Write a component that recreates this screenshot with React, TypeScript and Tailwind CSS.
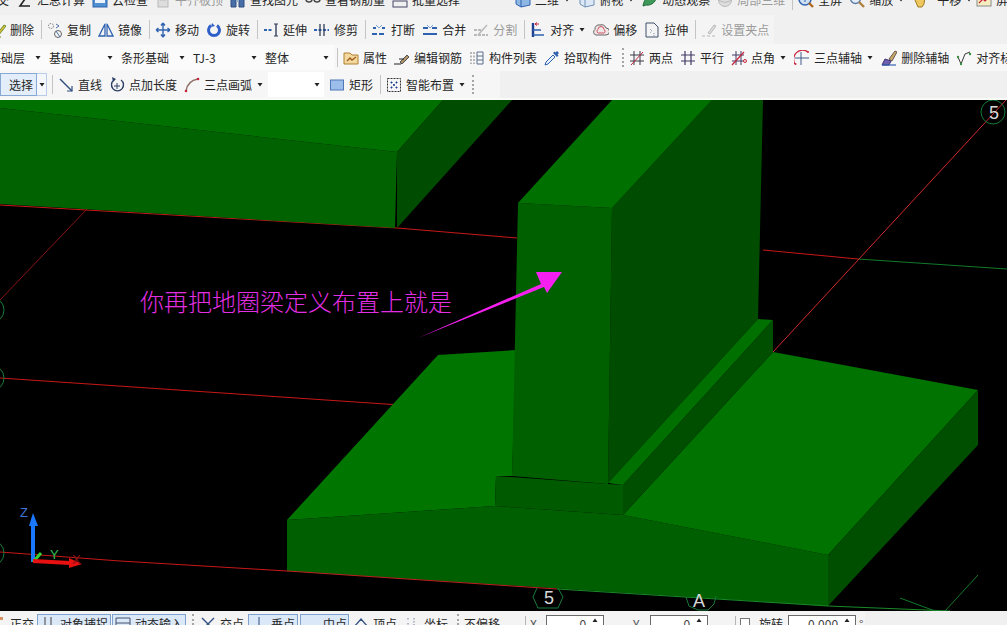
import React from "react";

const Ic = ({ children }: { children?: React.ReactNode }) => (
  <svg viewBox="0 0 16 16" className="w-4 h-4 shrink-0" fill="none" strokeWidth="1">
    {children}
  </svg>
);

const B = "#2f62b0";
const D = "#33405a";
const G = "#b9b9b9";
const R = "#c8243c";

const icons: Record<string, React.ReactNode> = {
  pen: (<><path d="M6 13l8-10 2 1-8 10z" fill="#d8c23c" stroke="#6f8f2c" /><path d="M3 15h9" stroke="#6f8f2c" strokeDasharray="2 1" /></>),
  copy: (<><circle cx="4" cy="4" r="2.5" stroke="#777" strokeDasharray="1.5 1" /><circle cx="11" cy="12" r="3.5" stroke="#666" /><path d="M9 2l3 2-3 2M9 9l4 6" stroke="#4d6fa8" /></>),
  mirror: (<><path d="M7 2v12H1zM9 2v12h6z" stroke={B} strokeWidth="1.3" /><path d="M8 1v14" stroke="#8aa5d0" /></>),
  move: (<path d="M8 1v14M1 8h14M8 1L6 3.5M8 1l2 2.5M8 15l-2-2.5M8 15l2-2.5M1 8l2.5-2M1 8l2.5 2M15 8l-2.5-2M15 8l-2.5 2" stroke={B} strokeWidth="1.4" />),
  rotate: (<><path d="M5 3.5A5.5 5.5 0 1 0 11 3.5" stroke="#2f5fc8" strokeWidth="3" /><path d="M6 1l3 3-4 1z" fill="#2f5fc8" /></>),
  extend: (<><path d="M1 8h9" stroke={B} strokeWidth="2" strokeDasharray="3 1.5" /><path d="M13 2v12" stroke={D} strokeWidth="1.4" /><path d="M11 2h4M11 14h4" stroke={D} /></>),
  trim: (<><path d="M0 8h15" stroke={B} strokeWidth="2" strokeDasharray="3 1.5" /><path d="M6 2v12M10 2v12" stroke={D} strokeWidth="1.3" /></>),
  brk: (<><path d="M1 12h14" stroke={B} strokeWidth="2" strokeDasharray="5 2" /><path d="M2 6h3M11 6h3" stroke={B} strokeWidth="2" /><path d="M5 3l3 3M11 3L8 6" stroke="#7da2ce" /></>),
  merge: (<><path d="M1 12h14" stroke={B} strokeWidth="2" /><path d="M1 6h5M10 6h5" stroke={B} strokeWidth="2" /><path d="M5 3l3 3M11 3L8 6" stroke="#7da2ce" /></>),
  split: (<><path d="M1 13h14M1 8h9" stroke={G} strokeWidth="2" strokeDasharray="3 1" /><path d="M5 13L14 3" stroke={G} strokeWidth="1.5" /></>),
  align: (<><path d="M3 1v14" stroke="#1f3f8f" strokeWidth="2.4" /><path d="M3 13h11M3 8h8" stroke="#2f62b0" strokeWidth="1.5" /><path d="M9 2H5l2-1.5M5 2l2 1.5" stroke={R} /></>),
  offset: (<><path d="M3 13a3 3 0 0 1-1-5.5A4 4 0 0 1 7 3a5 5 0 0 1 6 3 3.5 3.5 0 0 1 0 7z" stroke="#666" fill="#efe7e7" /><path d="M5 11a2 2 0 0 1 0-3.5 3 3 0 0 1 6 0 2 2 0 0 1 0 3.5z" stroke="#d05060" /></>),
  stretch: (<><path d="M2 1h8l4 4v10H2z" stroke="#40506a" /><path d="M6 7l2 2-2 2M10 14V10" stroke="#7a8cab" strokeDasharray="1 1" /></>),
  grip: (<><path d="M7 11l6-8 2 1-6 8z" fill="#ddd" stroke={G} /><path d="M1 14h13" stroke={G} strokeDasharray="3 2" /></>),
  attr: (<><path d="M1 3h6l2 2h6v9H1z" fill="#f3d9a0" stroke="#b08030" /><path d="M4 11l3-3 2 2 4-3" stroke="#a06020" strokeWidth="1.4" /></>),
  rebar: (<><path d="M0 14h7" stroke="#222" /><path d="M6 12l7-7 2 2-7 7z" fill="#b09468" stroke="#555" /><path d="M5 9h5" stroke="#222" /></>),
  list: (<><path d="M2 2v12M5 2v12" stroke="#777" strokeDasharray="2 1.5" /><path d="M8 2h6v12H8zM8 6h6M8 10h6" stroke="#5a6f90" /></>),
  pick: (<><path d="M1 15l1-3 7-7 2 2-7 7z" fill="#e8f0fa" stroke={B} /><path d="M9 3l4 4 1.5-1.5-1-1L15 3l-2-2-1.5 1.5-1-1z" fill={B} /></>),
  twop: (<><path d="M5 1v14M11 1v14M1 5h14M1 11h14" stroke="#3a3a4a" /><path d="M2 15L14 2" stroke={R} /></>),
  par: (<path d="M5 1v14M11 1v14M1 5h14M1 11h14" stroke="#433a66" strokeWidth="1.2" />),
  angle: (<><path d="M5 1v14M10 1v14M1 5h12M1 11h12" stroke="#433a66" /><path d="M1 15L13 2" stroke={R} strokeWidth="1.2" /><circle cx="14" cy="11" r="1.5" stroke={R} /></>),
  taxis: (<><path d="M1 14A9 9 0 0 1 14 2" stroke={R} strokeWidth="1.2" /><path d="M7 2v13M1 8h14" stroke="#3f5a8a" /><circle cx="1.5" cy="14" r="1" fill={R} /><circle cx="14" cy="2" r="1" fill={R} /></>),
  del: (<><path d="M8 9l6-8 2 1-5 9z" fill="#c8a868" stroke="#6a5a50" /><path d="M1 15l3-6 6 2-2 4z" fill="#7060b0" stroke="#403070" /><path d="M1 15h14" stroke="#3060b0" strokeWidth="1.2" /></>),
  mark: (<><path d="M2 7l3 7 4-10 5-2" stroke="#3a3a3a" /><circle cx="2" cy="7" r="1.2" fill="#3a9040" /><circle cx="5" cy="14" r="1.2" fill="#3a9040" /><circle cx="14" cy="4" r="1.2" fill="#3a9040" /></>),
  line: (<><path d="M2 2l12 12" stroke="#2f4f80" strokeWidth="1.4" /><path d="M14 9v5H9" stroke="#2f4f80" strokeWidth="1.2" /></>),
  plen: (<><path d="M5 3A6 6 0 1 0 12 3" stroke="#2d3f66" strokeWidth="1.4" /><path d="M3 0l4 2-3 3z" fill="#2d3f66" /><path d="M8 6v6M5 9h6" stroke="#2d3f66" /></>),
  arc: (<><path d="M2 14C3 7 8 3 14 2" stroke="#907068" strokeWidth="1.5" /><circle cx="2" cy="14" r="1.3" fill={R} /><circle cx="14" cy="2" r="1.3" fill={R} /></>),
  rect: (<rect x="1.5" y="3" width="13" height="10" fill="#9dbdea" stroke="#4f78b8" />),
  smart: (<><rect x="1.5" y="1.5" width="13" height="13" stroke="#333" strokeDasharray="2 1" /><path d="M5 5h1v1H5zM10 5h1v1h-1zM5 10h1v1H5zM10 10h1v1h-1zM7.5 7.5h1v1h-1z" fill="#1f3f8f" stroke="#1f3f8f" /></>),
  sigma: (<path d="M13 14H3l5-7-5-6h10" stroke="#222" strokeWidth="1.6" />),
  cloud: (<><rect x="1" y="1" width="14" height="14" fill="#4f8fd0" stroke="#2f62b0" /><rect x="3" y="3" width="10" height="8" fill="#eaf3fb" /></>),
  sheet: (<><rect x="3" y="1" width="10" height="14" fill="#ddd" stroke={G} /><path d="M5 5h6M5 8h6" stroke={G} /></>),
  find: (<><path d="M1 2h5v13H1zM9 2h5v13H9z" fill="#486ea8" stroke="#2f4f80" /><rect x="6" y="5" width="3" height="5" fill="#98b0d0" /></>),
  view: (<><circle cx="4" cy="7" r="3" stroke="#444" strokeWidth="1.5" /><circle cx="12" cy="7" r="3" stroke="#444" strokeWidth="1.5" /><path d="M7 7h2" stroke="#444" /></>),
  batch: (<><rect x="1" y="1" width="6" height="6" stroke="#446" /><rect x="9" y="1" width="6" height="6" fill="#8aa8d8" stroke="#446" /><rect x="1" y="9" width="14" height="6" stroke="#446" /></>),
  cube: (<><path d="M1 3l9-2 5 3v9l-9 2-5-3z" fill="#8fb7e4" stroke="#2f62b0" /><path d="M6 5v10M1 3l5 2 9-1" stroke="#2f62b0" /></>),
  cube2: (<><path d="M1 3l9-2 5 3v9l-9 2-5-3z" fill="#dce8f5" stroke="#7090b8" /><path d="M6 5v10M1 3l5 2 9-1" stroke="#7090b8" /></>),
  leaf: (<path d="M1 14C2 6 8 2 15 2c0 7-5 12-11 11z" fill="#3f9a5a" stroke="#226a3a" />),
  orb: (<><circle cx="8" cy="8" r="6.5" fill="#ddd" stroke={G} /><path d="M2 8c4 3 8 3 12 0" stroke={G} /></>),
  full: (<><circle cx="7" cy="7" r="6" fill="#cfe0f5" stroke="#2f62b0" strokeWidth="1.5" /><path d="M11 11l4 4" stroke="#b06a20" strokeWidth="2.4" /><path d="M7 4v6M4 7h6" stroke="#2f62b0" /></>),
  zoom: (<><circle cx="6.5" cy="6.5" r="5" fill="#e5eef8" stroke="#5a7aa8" strokeWidth="1.4" /><path d="M10 10l5 5" stroke="#b08040" strokeWidth="2.4" /></>),
  hand: (<path d="M3 8l1-4 2 2 1-5 2 0 1 4 2-2 1 2-1 7-2 3H6z" fill="#f0c860" stroke="#a07a20" />),
  screen: (<><rect x="1" y="2" width="14" height="12" fill="#f6edc0" stroke="#888" /><path d="M3 11l4-4 2 2 4-4" stroke={R} strokeWidth="1.2" /></>),
  snap: (<><path d="M5 1v11M11 1v11M1 12h14" stroke="#444" /><path d="M4 11h8v4H4z" fill="#d08050" /></>),
  dyn: (<><path d="M1 2h14v11H1zM1 7h14" stroke="#405070" /></>),
  cross: (<path d="M2 2l12 12M14 2L2 14" stroke="#2f4f80" strokeWidth="1.4" />),
  mid: (<><path d="M8 1v14" stroke="#2f4f80" /><path d="M2 15h12" stroke="#2f4f80" /></>),
  cen: (<rect x="6" y="9" width="5" height="5" fill="#1f3f8f" />),
  top: (<path d="M1 11l7-8 7 8v4H1z" stroke="#2f4f80" strokeWidth="1.3" />),
  coord: (<path d="M4 2v2M4 7v2M4 12v2M10 2v12" stroke="#6f7f9a" strokeDasharray="1.5 1.5" />),
};

const Caret = ({ c = "ml-[4px]" }: { c?: string }) => (
  <svg viewBox="0 0 8 4" className={`w-2 h-1 shrink-0 ${c}`}>
    <path d="M1.5 0h5L4 3.5z" fill="#222" />
  </svg>
);

function T({
  i,
  t,
  c = "ml-[7px]",
  gray,
  arrow,
  gap = "gap-[4px]",
}: {
  i: string;
  t: string;
  c?: string;
  gray?: boolean;
  arrow?: boolean;
  gap?: string;
}) {
  return (
    <div className={`flex items-center shrink-0 ${c}`}>
      <div className={`flex items-center ${gap}`}>
        <Ic>{icons[i]}</Ic>
        <span className={`whitespace-nowrap ${gray ? "text-[#9b9b9b]" : "text-[#262626]"}`}>{t}</span>
      </div>
      {arrow && <Caret />}
    </div>
  );
}

const Sep = () => <div className="w-px h-[19px] bg-[#c4c4c4] ml-[7px] -mr-[2px] shrink-0" />;
const Handle = ({ c = "ml-[10px] -mr-[2px]" }: { c?: string }) => (
  <div className={`w-[2px] h-[19px] shrink-0 border-l-2 border-dotted border-[#a5a5a5] ${c}`} />
);

function Combo({ t, c = "w-[72px] pl-[3px]" }: { t: string; c?: string }) {
  return (
    <div className={`flex items-center justify-between h-[25px] bg-[#fbfbfb] pr-[4px] shrink-0 ${c}`}>
      <span className="text-[#262626] whitespace-nowrap">{t}</span>
      <Caret c="" />
    </div>
  );
}

function Spin({ v, c }: { v: string; c: string }) {
  return (
    <div className={`flex items-start justify-end gap-[5px] h-[20px] bg-white border border-[#6a6a6a] pr-[4px] shrink-0 ${c}`}>
      <span className="text-[#444]">{v}</span>
      <svg viewBox="0 0 8 4" className="w-2 h-1 mt-[2px]">
        <path d="M1.5 4h5L4 .5z" fill="#222" />
      </svg>
    </div>
  );
}

function SnapBtn({ i, t, c }: { i: string; t: string; c: string }) {
  return (
    <div className={`flex items-start gap-[4px] h-[22px] -mt-[2px] pt-px pl-[2px] bg-[#dbe8f7] border border-[#7da2ce] shrink-0 ${c}`}>
      <Ic>{icons[i]}</Ic>
      <span className="text-[#262626] whitespace-nowrap">{t}</span>
    </div>
  );
}

function Scene() {
  return (
    <svg viewBox="0 100 1007 511" className="block w-[1007px] h-[511px]">
      {/* ground lines */}
      <g fill="none" strokeWidth="1">
        <path d="M0 205L397 228L517 238M763 250L858 259" stroke="#c81818" />
        <path d="M858 259L1007 269" stroke="#127a2a" />
        <path d="M1006 100L773 352" stroke="#d02a2a" />
        <path d="M0 300L88 208" stroke="#8a1414" />
        <path d="M0 378L400 405" stroke="#c81818" />
        <path d="M0 552L120 561L287 571" stroke="#c81818" />
        <path d="M900 598L935 611M978 575L945 611" stroke="#127a2a" />
      </g>

      {/* left block */}
      <polygon points="0,108 397,152 395,228 0,204" fill="#006200" />
      <polygon points="0,100 443,100 397,152 0,108" fill="#007000" />
      <polygon points="443,100 512,100 397,228 397,152" fill="#004c00" />

      {/* footing */}
      <polygon points="438,355 516,350 512,476 496,476 495,506 287,520" fill="#007600" />
      <polygon points="287,520 495,506 623,515 828,555 828,606 287,571" fill="#005f00" />
      <polygon points="623,515 773,352 978,390 828,555" fill="#007300" />
      <polygon points="828,555 978,390 978,445 828,606" fill="#004f00" />

      {/* stem */}
      <polygon points="612,208 712,100 763,100 758,319 608,483" fill="#004c00" />
      <polygon points="518,203 612,208 608,484 512,476" fill="#006000" />
      <polygon points="518,203 612,100 712,100 612,208" fill="#007000" />
      <polygon points="496,476 608,484 623,485 623,515 495,506" fill="#005a00" />
      <polygon points="758,319 773,320 623,485 608,483" fill="#007000" />
      <polygon points="773,320 773,352 623,515 623,485" fill="#004f00" />

      {/* slab edge lines */}
      <path d="M287 571L557 589" stroke="#c02020" fill="none" />
      <path d="M557 589L828 606L950 611" stroke="#1a8a2a" fill="none" />

      {/* axis markers */}
      <g fill="none" stroke="#177a3a">
        <circle cx="993" cy="112" r="12" />
        <path d="M537 588l-4 9 5 11h20l5-11-5-9" />
        <path d="M686 597l3 9 9 4h10l6-6 2-8" />
        <circle cx="-9" cy="310" r="13" />
        <circle cx="-9" cy="378" r="13" />
        <circle cx="-9" cy="553" r="13" />
      </g>
      <g fill="#d8d8d8" fontFamily="'Liberation Sans', sans-serif" fontSize="18" textAnchor="middle">
        <text x="994" y="119">5</text>
        <text x="549" y="604">5</text>
        <text x="699" y="607">A</text>
      </g>

      {/* coordinate triad */}
      <path d="M33 562V525" stroke="#1a78ff" strokeWidth="4" />
      <polygon points="33,513 38,526 29,526" fill="#1a78ff" />
      <path d="M33 562L41 553" stroke="#33d633" strokeWidth="3" />
      <path d="M33 561L70 563" stroke="#e81010" strokeWidth="4" />
      <polygon points="82,564 69,558 69,568" fill="#e81010" />
      <g fontFamily="'Liberation Sans', sans-serif" fontSize="13" fontWeight="300">
        <text x="20" y="517" fill="#3f72d8">Z</text>
        <text x="50" y="559" fill="#2fbf4f">Y</text>
        <text x="72" y="564" fill="#8a1414">X</text>
      </g>

      {/* annotation arrow */}
      <polygon points="418,338 541,284 536,272 562,272 547,293 544,287" fill="#f520f0" />
    </svg>
  );
}

export default function App() {
  return (
    <div className="relative w-[1007px] h-[625px] overflow-hidden flex flex-col bg-[#f0f0f0] text-[12px] leading-4 [font-family:'Noto_Sans_CJK_SC','Liberation_Sans',sans-serif]">
      <header className="h-[100px] shrink-0 flex flex-col">
        <div className="h-[15px] overflow-hidden shrink-0">
          <div className="flex items-center h-4 -mt-[8px]">
            <span className="-ml-[3px] text-[#262626]">交</span>
            <T i="sigma" t="汇总计算" c="ml-[8px]" />
            <T i="cloud" t="云检查" />
            <T i="sheet" t="平齐板顶" gray />
            <T i="find" t="查找图元" />
            <T i="view" t="查看钢筋量" />
            <T i="batch" t="批量选择" />
            <T i="cube" t="二维" c="ml-[55px]" arrow />
            <T i="cube2" t="俯视" c="ml-[8px]" arrow />
            <T i="leaf" t="动态观察" />
            <T i="orb" t="局部三维" gray />
            <Sep />
            <T i="full" t="全屏" />
            <T i="zoom" t="缩放" arrow />
            <T i="hand" t="平移" gap="gap-[9px]" arrow />
            <T i="screen" t="屏幕旋转" c="ml-[3px]" />
          </div>
        </div>

        <div className="h-[29px] shrink-0 flex">
          <div className="flex items-center bg-[#f4f4f4] pr-[5px]">
            <T i="pen" t="删除" c="-ml-[10px]" />
            <Sep />
            <T i="copy" t="复制" />
            <T i="mirror" t="镜像" />
            <Sep />
            <T i="move" t="移动" />
            <T i="rotate" t="旋转" />
            <Sep />
            <T i="extend" t="延伸" />
            <T i="trim" t="修剪" />
            <Sep />
            <T i="brk" t="打断" />
            <T i="merge" t="合并" />
            <T i="split" t="分割" gray />
            <Sep />
            <T i="align" t="对齐" arrow />
            <T i="offset" t="偏移" />
            <T i="stretch" t="拉伸" />
            <Sep />
            <T i="grip" t="设置夹点" gray />
          </div>
        </div>

        <div className="h-[27px] shrink-0 flex items-center bg-[#f7f7f7]">
          <Combo t="基础层" c="w-[59px] -ml-[13px] pl-[2px]" />
          <Combo t="基础" />
          <Combo t="条形基础" />
          <Combo t="TJ-3" />
          <Combo t="整体" />
          <div className="w-px h-[19px] bg-[#c4c4c4] ml-[3px] -mr-[2px] shrink-0" />
          <T i="attr" t="属性" />
          <T i="rebar" t="编辑钢筋" />
          <T i="list" t="构件列表" />
          <T i="pick" t="拾取构件" />
          <Handle />
          <T i="twop" t="两点" />
          <T i="par" t="平行" />
          <T i="angle" t="点角" arrow />
          <T i="taxis" t="三点辅轴" arrow />
          <T i="del" t="删除辅轴" />
          <T i="mark" t="对齐标注" />
        </div>

        <div className="h-[27px] shrink-0 flex">
          <div className="flex items-center bg-[#f6f6f6] pr-[26px]">
            <div className="flex items-center justify-end w-[37px] h-[23px] pr-[3px] bg-[#e3eefa] border border-[#86a9d6] text-[#262626] shrink-0">
              选择
            </div>
            <div className="flex items-center justify-center w-[10px] h-[23px] border border-l-0 border-[#b9cde6] bg-[#f4f8fc] shrink-0">
              <Caret c="" />
            </div>
            <div className="w-px h-[19px] bg-[#c4c4c4] ml-[5px] -mr-[1px] shrink-0" />
            <T i="line" t="直线" c="ml-[6px]" />
            <T i="plen" t="点加长度" />
            <T i="arc" t="三点画弧" arrow />
            <div className="flex items-center justify-end w-[56px] h-[25px] bg-white pr-[3px] ml-[4px] shrink-0">
              <Caret c="" />
            </div>
            <T i="rect" t="矩形" c="ml-[5px]" />
            <Sep />
            <T i="smart" t="智能布置" />
            <Caret />
            <Handle c="ml-[6px]" />
          </div>
        </div>
        <div className="h-[2px] shrink-0 bg-[#f8fbf6]" />
      </header>

      <main className="relative h-[511px] shrink-0 bg-black overflow-hidden">
        <Scene />
        <div className="absolute left-[140px] top-[189px] text-[24px] leading-6 font-light text-[#e32ee3] whitespace-nowrap">
          你再把地圈梁定义布置上就是
        </div>
      </main>

      <footer className="h-[14px] shrink-0 overflow-hidden flex">
        <div className="flex items-start w-[865px] h-full pt-[5px] bg-[#f4f4f4] shrink-0">
          <div className="w-[3px] h-[3px] bg-[#d89060] shrink-0 mt-[1px]" />
          <span className="ml-[7px] text-[#262626] whitespace-nowrap">正交</span>
          <SnapBtn i="snap" t="对象捕捉" c="w-[74px] ml-[3px]" />
          <SnapBtn i="dyn" t="动态输入" c="w-[74px] ml-px" />
          <Handle c="ml-[6px] -mt-[2px]" />
          <T i="cross" t="交点" c="ml-[6px]" />
          <SnapBtn i="mid" t="垂点" c="w-[50px] ml-[4px]" />
          <SnapBtn i="cen" t="中点" c="w-[49px] ml-[2px]" />
          <T i="top" t="顶点" c="ml-[4px]" />
          <T i="coord" t="坐标" />
          <Handle c="ml-[9px] -mt-[2px]" />
          <span className="ml-[5px] text-[#262626] whitespace-nowrap">不偏移</span>
          <div className="w-px h-[14px] bg-[#b5b5b5] ml-[25px] shrink-0" />
          <span className="ml-[4px] w-[16px] text-[#555] shrink-0">X</span>
          <Spin v="0" c="w-[58px] -mt-px" />
          <span className="ml-[29px] w-[17px] text-[#555] shrink-0">Y</span>
          <Spin v="0" c="w-[58px] -mt-px" />
          <div className="w-px h-[14px] bg-[#b5b5b5] ml-[27px] shrink-0" />
          <div className="w-[10px] h-[10px] bg-white border border-[#777] ml-[4px] mt-[2px] shrink-0" />
          <span className="ml-[9px] text-[#262626] whitespace-nowrap">旋转</span>
          <Spin v="0.000" c="w-[68px] ml-[5px] -mt-px" />
          <span className="ml-[3px] text-[#555]">°</span>
        </div>
      </footer>
    </div>
  );
}
